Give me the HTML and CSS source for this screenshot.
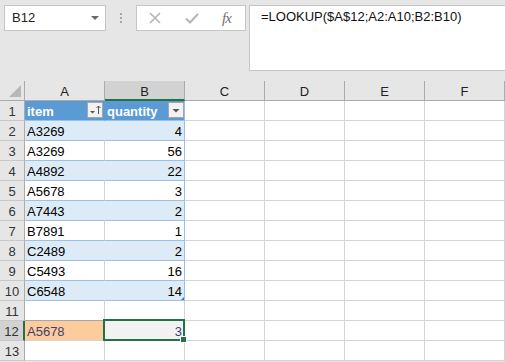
FILE: index.html
```html
<!DOCTYPE html>
<html lang="en">
<head>
    <meta charset="UTF-8">
    <title>LOOKUP</title>
    <link rel="stylesheet" href="styles.css">
</head>
<body>
    <div class="toolbar">
        <div class="namebox">
            <span>B12</span>
            <svg class="caret" width="8" height="5" viewBox="0 0 8 5"><polygon points="0,0 8,0 4,4" fill="#6a6a6a"/></svg>
        </div>
        <div class="grip"><i></i><i></i><i></i></div>
        <div class="fxbox">
            <svg width="12" height="12" viewBox="0 0 12 12"><path d="M1 1 L11 11 M11 1 L1 11" stroke="#b4b4b4" stroke-width="1.6" fill="none"/></svg>
            <svg width="14" height="11" viewBox="0 0 14 11"><path d="M1 5.5 L5 9.5 L13 1" stroke="#b4b4b4" stroke-width="2" fill="none"/></svg>
            <span class="fx">fx</span>
        </div>
        <div class="formula">=LOOKUP($A$12;A2:A10;B2:B10)</div>
    </div>

    <div class="sheet">
        <div class="row">
            <div class="rh corner"><span class="tri"></span></div>
            <div class="ch">A</div>
            <div class="ch sel">B</div>
            <div class="ch">C</div>
            <div class="ch">D</div>
            <div class="ch">E</div>
            <div class="ch">F</div>
        </div>
        <div class="row">
            <div class="rh">1</div>
            <div class="c th a">item
                <span class="filter"><svg width="14" height="14" viewBox="0 0 14 14"><polygon points="2,8 7,8 4.5,10.5" fill="#555"/><path d="M10.5 3 V11 M8.5 5 L10.5 3 L12.5 5" stroke="#555" stroke-width="1" fill="none"/></svg></span>
            </div>
            <div class="c th b">quantity
                <span class="filter"><svg width="14" height="14" viewBox="0 0 14 14"><polygon points="3.5,6 10.5,6 7,9.5" fill="#555"/></svg></span>
            </div>
            <div class="c"></div><div class="c"></div><div class="c"></div><div class="c"></div>
        </div>
        <div class="row band">
            <div class="rh">2</div>
            <div class="c td a">A3269</div><div class="c td b num">4</div>
            <div class="c"></div><div class="c"></div><div class="c"></div><div class="c"></div>
        </div>
        <div class="row">
            <div class="rh">3</div>
            <div class="c td a">A3269</div><div class="c td b num">56</div>
            <div class="c"></div><div class="c"></div><div class="c"></div><div class="c"></div>
        </div>
        <div class="row band">
            <div class="rh">4</div>
            <div class="c td a">A4892</div><div class="c td b num">22</div>
            <div class="c"></div><div class="c"></div><div class="c"></div><div class="c"></div>
        </div>
        <div class="row">
            <div class="rh">5</div>
            <div class="c td a">A5678</div><div class="c td b num">3</div>
            <div class="c"></div><div class="c"></div><div class="c"></div><div class="c"></div>
        </div>
        <div class="row band">
            <div class="rh">6</div>
            <div class="c td a">A7443</div><div class="c td b num">2</div>
            <div class="c"></div><div class="c"></div><div class="c"></div><div class="c"></div>
        </div>
        <div class="row">
            <div class="rh">7</div>
            <div class="c td a">B7891</div><div class="c td b num">1</div>
            <div class="c"></div><div class="c"></div><div class="c"></div><div class="c"></div>
        </div>
        <div class="row band">
            <div class="rh">8</div>
            <div class="c td a">C2489</div><div class="c td b num">2</div>
            <div class="c"></div><div class="c"></div><div class="c"></div><div class="c"></div>
        </div>
        <div class="row">
            <div class="rh">9</div>
            <div class="c td a">C5493</div><div class="c td b num">16</div>
            <div class="c"></div><div class="c"></div><div class="c"></div><div class="c"></div>
        </div>
        <div class="row band">
            <div class="rh">10</div>
            <div class="c td a">C6548</div><div class="c td b num last">14<span class="resize"></span></div>
            <div class="c"></div><div class="c"></div><div class="c"></div><div class="c"></div>
        </div>
        <div class="row">
            <div class="rh">11</div>
            <div class="c"></div><div class="c"></div>
            <div class="c"></div><div class="c"></div><div class="c"></div><div class="c"></div>
        </div>
        <div class="row">
            <div class="rh sel">12</div>
            <div class="c input">A5678</div>
            <div class="c active num">3<span class="cursor"><span class="handle"></span></span></div>
            <div class="c"></div><div class="c"></div><div class="c"></div><div class="c"></div>
        </div>
        <div class="row">
            <div class="rh">13</div>
            <div class="c"></div><div class="c"></div>
            <div class="c"></div><div class="c"></div><div class="c"></div><div class="c"></div>
        </div>
    </div>
</body>
</html>
```

FILE: styles.css
```css
body {
    margin: 0;
    background: #e6e6e6;
    font-family: "Liberation Sans", Arial, sans-serif;
    font-size: 13px;
    color: #000;
    overflow: hidden;
}

/* formula bar */
.toolbar {
    height: 81px;
    display: flex;
    align-items: flex-start;
    padding: 5px 0 0 4px;
    box-sizing: border-box;
}

.toolbar > * {
    flex-shrink: 0;
}

.namebox {
    width: 102px;
    height: 26px;
    box-sizing: border-box;
    background: #fff;
    border: 1px solid #c6c6c6;
    display: flex;
    align-items: center;
    justify-content: space-between;
    padding: 0 6px 1px 7px;
    font-size: 13px;
    color: #222;
}

.caret {
    margin-top: 1px;
}

.grip {
    width: 2px;
    margin: 8px 14px 0 14px;
    display: flex;
    flex-direction: column;
    gap: 2px;
}

.grip i {
    display: block;
    width: 2px;
    height: 2px;
    background: #a6a6a6;
}

.fxbox {
    width: 110px;
    height: 26px;
    box-sizing: border-box;
    background: #fff;
    border: 1px solid #c6c6c6;
    display: flex;
    align-items: center;
    padding: 0 0 0 12px;
    gap: 24px;
}

.fx {
    font-family: "Liberation Serif", serif;
    font-style: italic;
    font-size: 15px;
    color: #707070;
    letter-spacing: -1px;
    margin-left: -1px;
}

.formula {
    width: 270px;
    height: 66px;
    margin-left: 3px;
    box-sizing: border-box;
    background: #fff;
    border: 1px solid #c6c6c6;
    padding: 3px 0 0 11px;
    font-size: 13px;
    color: #111;
}

/* grid */
.row {
    display: flex;
    height: 20px;
}

.rh, .ch, .c {
    box-sizing: border-box;
    height: 20px;
    flex: 0 0 80px;
    border-right: 1px solid #d4d4d4;
    border-bottom: 1px solid #d4d4d4;
    background: #fff;
    padding: 2px 2px 0;
    line-height: 17px;
    white-space: nowrap;
    overflow: hidden;
}

.rh {
    flex-basis: 25px;
    background: #e6e6e6;
    border-right-color: #ababab;
    border-bottom-color: #c8c8c8;
    text-align: center;
    color: #333;
    padding: 2px 0 0;
}

.rh.sel {
    background: #d2d2d2;
    border-right: 2px solid #217346;
}

.ch {
    background: #e6e6e6;
    border-right-color: #ababab;
    border-bottom-color: #ababab;
    text-align: center;
    color: #222;
}

.ch.sel {
    background: #d2d2d2;
    border-bottom: 2px solid #217346;
}

.corner {
    position: relative;
    border-bottom-color: #ababab;
}

.corner .tri {
    position: absolute;
    right: 3px;
    bottom: 3px;
    width: 0;
    height: 0;
    border-left: 12px solid transparent;
    border-bottom: 12px solid #b8b8b8;
}

/* table */
.th {
    background: #5b9bd5;
    color: #fff;
    font-weight: bold;
    display: flex;
    justify-content: space-between;
    padding-right: 1px;
    border-right-color: #5b9bd5;
    border-bottom-color: #9bc2e6;
}

.th.b {
    padding-right: 0;
    border-right-color: #9bc2e6;
}

.filter {
    width: 16px;
    height: 16px;
    margin-top: -1px;
    box-sizing: border-box;
    border: 1px solid #a6a6a6;
    background: #f2f2f2;
    display: flex;
    align-items: center;
    justify-content: center;
}

.td {
    border-bottom-color: #9bc2e6;
}

.td.b {
    border-right-color: #9bc2e6;
}

.band .td {
    background: #ddebf7;
}

.band .td.a {
    border-right-color: #ddebf7;
}

.num {
    text-align: right;
}

.last {
    position: relative;
}

.resize {
    position: absolute;
    right: 0;
    bottom: 0;
    width: 0;
    height: 0;
    border-left: 3px solid transparent;
    border-bottom: 3px solid #4472c4;
}

.input {
    background: #fccc9c;
    color: #3f3f76;
    border-top: 1px solid #a6a6a6;
    margin-top: -1px;
    height: 21px;
}

.active {
    position: relative;
    overflow: visible;
    background: #f2f2f2;
    color: #3f3f76;
}

.cursor {
    position: absolute;
    left: -2px;
    top: -2px;
    right: -1px;
    bottom: -1px;
    border: 2px solid #217346;
}

.handle {
    position: absolute;
    right: -4px;
    bottom: -4px;
    width: 5px;
    height: 5px;
    background: #217346;
    border: 1px solid #fff;
}
```
